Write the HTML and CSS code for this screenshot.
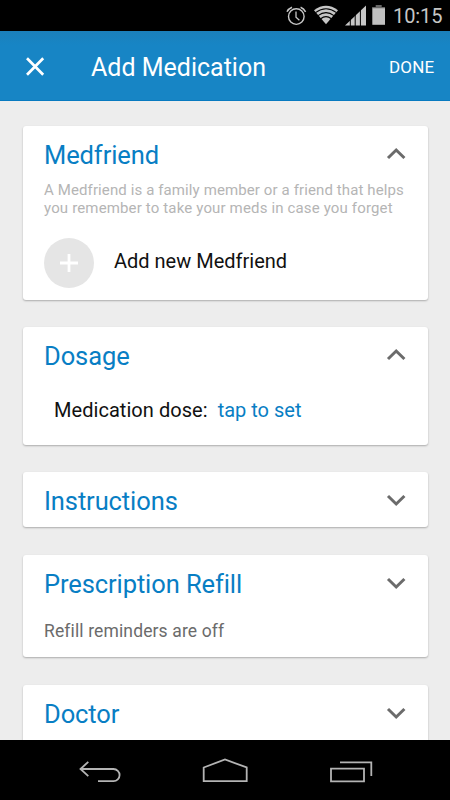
FILE: index.html
```
<!DOCTYPE html>
<html lang="en">
<head>
<meta charset="utf-8">
<title>Add Medication</title>
<link rel="stylesheet" href="styles.css">
</head>
<body>
<div class="screen">
  <div class="status">
    <svg class="status-icons" width="116" height="31" viewBox="0 0 116 31" fill="none" stroke="#c6c6c6">
      <circle cx="12.300" cy="16.600" r="7.800" stroke-width="1.400"/>
      <path d="M12 11.500v5.600l3.400 3.200" stroke-width="1.300"/>
      <path d="M3 11.800Q4.500 8.600 8 7.200M16.600 7.200Q20 8.600 21.600 11.800" stroke-width="1.500"/>
      <g fill="#c6c6c6" stroke="none">
        <path d="M42 24.300L30 10.200Q42 1.500 54 10.200Z"/>
        <path d="M61 25.500L82 5.500v20Z"/>
        <path d="M88.300 7.500H101v17.300H88.300Z" fill="#c0c0c0"/>
        <path d="M91.700 5h6v2.500h-6ZM88.300 7h12.700v1.200H88.300Z" fill="#666"/>
      </g>
      <path d="M31.500 12.600Q42 4.900 52.500 12.600M34 15.600Q42 9.600 50 15.600M36.700 18.700Q42 14.600 47.300 18.700" stroke="#000" stroke-width="1.100"/>
      <path d="M66.300 4v22M71.200 4v22M76.400 4v22" stroke="#000" stroke-width="1"/>
    </svg>
    <span class="clock">10:15</span>
  </div>
  <header class="appbar">
    <svg class="close" width="20" height="20" viewBox="0 0 20 20" fill="none" stroke="#fff" stroke-width="2.700"><path d="M2 2.300L18.200 18.700M18.200 2.300L2 18.700"/></svg>
    <h1 class="appbar-title">Add Medication</h1>
    <span class="done">DONE</span>
  </header>
  <main class="content">
    <section class="card card-friend">
      <div class="card-head"><h2>Medfriend</h2>
        <svg class="chev" width="20" height="14" viewBox="0 0 20 14"><path d="M2 11L10.200 3L18.400 11"/></svg></div>
      <p class="hint"><span class="hint-first">A Medfriend is a family member or a friend that helps</span><br><span class="hint-second">you remember to take your meds in case you forget</span></p>
      <div class="add-row">
        <span class="plus"><svg width="20" height="20" viewBox="0 0 20 20" fill="none" stroke="#fff" stroke-width="2.800"><path d="M10 1v18M1 10h18"/></svg></span>
        <span class="add-label">Add new Medfriend</span>
      </div>
    </section>
    <section class="card card-dosage">
      <div class="card-head"><h2>Dosage</h2>
        <svg class="chev" width="20" height="14" viewBox="0 0 20 14"><path d="M2 11L10.200 3L18.400 11"/></svg></div>
      <div class="dose"><span class="dose-label">Medication dose:</span><span class="dose-link">tap to set</span></div>
    </section>
    <section class="card card-instr">
      <div class="card-head"><h2>Instructions</h2>
        <svg class="chev" width="20" height="14" viewBox="0 0 20 14"><path d="M2 3L10.200 11L18.400 3"/></svg></div>
    </section>
    <section class="card card-refill">
      <div class="card-head"><h2>Prescription Refill</h2>
        <svg class="chev" width="20" height="14" viewBox="0 0 20 14"><path d="M2 3L10.200 11L18.400 3"/></svg></div>
      <p class="refill-note">Refill reminders are off</p>
    </section>
    <section class="card card-doctor">
      <div class="card-head"><h2>Doctor</h2>
        <svg class="chev" width="20" height="14" viewBox="0 0 20 14"><path d="M2 3L10.200 11L18.400 3"/></svg></div>
    </section>
  </main>
  <nav class="navbar">
    <svg width="450" height="60" viewBox="0 0 450 60" fill="none" stroke="#b4b4b4" stroke-width="1.800">
      <path d="M98 41.200h15.500a6 6 0 0 0 0-12.200H81M88.300 21.800L80.500 29L88.300 36.200"/>
      <path d="M203.700 41.200V27.500L225 19.500L246.700 27.500V41.200Z"/>
      <path d="M331 28.700h33v12.700h-33ZM340 22.300h31.300V36"/>
    </svg>
  </nav>
</div>
</body>
</html>
```
FILE: styles.css
```
* { box-sizing: border-box; }
body { margin: 0; font-family: Roboto, "Liberation Sans", sans-serif; }
h1, h2, p { margin: 0; font-weight: 400; }
svg { display: block; flex: none; }
span, h2 { white-space: nowrap; }
.screen { width: 450px; height: 800px; display: flex; flex-direction: column; overflow: hidden; background: #ededed; }
.status { height: 31px; flex: none; background: #000; display: flex; align-items: center; padding-left: 284px; }
.clock { margin-left: -7px; color: #c6c6c6; font-size: 20px; line-height: 31px; padding-top: 1px; letter-spacing: -.1px; }
.appbar { height: 70px; flex: none; display: flex; align-items: center; padding-left: 25px; color: #fff; background: linear-gradient(#1b80bb, #1785c5 14px); border-bottom: 1px solid #087ac0; }
.appbar-title { margin-left: 46px; font-size: 25px; line-height: 30px; width: 298px; padding-top: 5px; }
.done { font-size: 17px; padding-top: 3px; letter-spacing: .2px; }
.content { flex: 1; min-height: 0; overflow: hidden; padding: 25px 22px 0 23px; display: flex; flex-direction: column; gap: 27.5px; }
.card { flex: none; background: #fff; border-radius: 3px; box-shadow: 0 1px 2px rgba(0, 0, 0, .28); padding: 0 21px; }
.card-friend { height: 173.5px; }
.card-dosage { height: 117.5px; }
.card-instr { height: 55px; }
.card-refill { height: 102.5px; }
.card-doctor { height: 80px; }
.card-head { height: 55px; padding-top: 3px; display: flex; align-items: center; justify-content: space-between; color: #087ec4; }
.card-head h2 { font-size: 25.5px; line-height: 34px; letter-spacing: -.1px; }
.chev { margin: 0 1px 2px 0; fill: none; stroke: #6b6b6b; stroke-width: 3; }
.hint { color: #b5b5b5; font-size: 15px; line-height: 17.5px; padding-top: 1px; }
.hint-first { letter-spacing: .11px; }
.hint-second { letter-spacing: .15px; }
.add-row { display: flex; align-items: center; margin-top: 21px; }
.plus { width: 50px; height: 50px; border-radius: 50%; background: #e5e5e5; display: flex; align-items: center; justify-content: center; }
.add-label { margin: -4px 0 0 20px; font-size: 20px; color: #111; }
.dose { padding: 16px 0 0 10px; font-size: 20px; line-height: 24px; color: #111; display: flex; gap: 10px; }
.dose-label { letter-spacing: .05px; }
.dose-link { color: #087ec4; }
.refill-note { padding-top: 11px; font-size: 17.5px; line-height: 20px; letter-spacing: .13px; color: #6b6b6b; }
.navbar { height: 60px; flex: none; background: #000; }
```
